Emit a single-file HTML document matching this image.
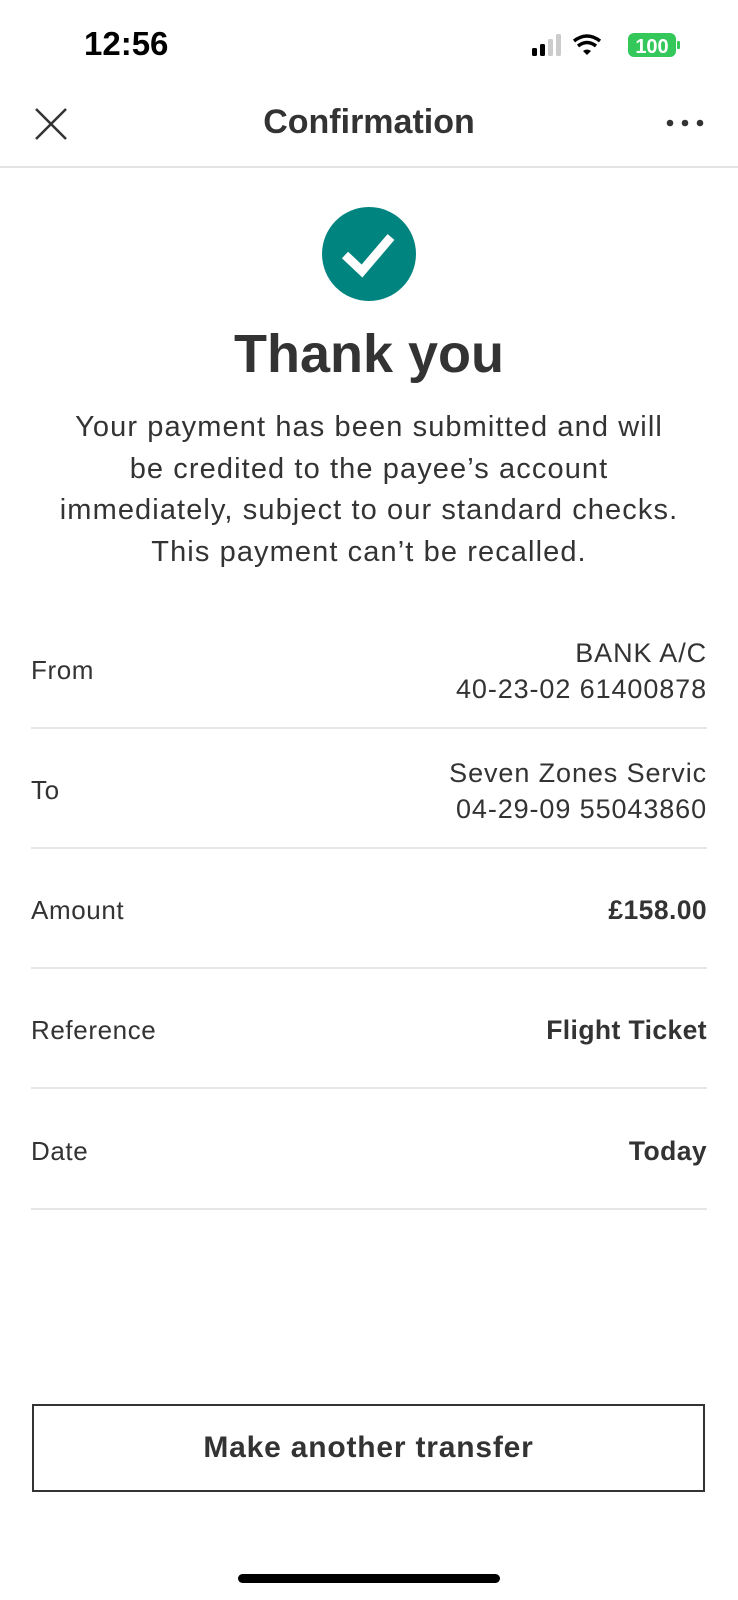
<!DOCTYPE html>
<html><head><meta charset="utf-8"><style>
body{margin:0;width:738px;height:1600px;background:#fff;font-family:"Liberation Sans",sans-serif;color:#333;position:relative;overflow:hidden}
.a{position:absolute}
.row{position:absolute;left:31px;right:31px;font-size:26px;color:#333;letter-spacing:0.6px}
.v{font-size:27px;letter-spacing:0.9px}
.b{font-weight:bold;font-size:26.5px;letter-spacing:0.4px}
.sep{position:absolute;left:31px;right:31px;height:2px;background:#e6e6e6}
</style></head><body>
<div class="a" style="left:84px;top:25px;font-size:33px;font-weight:bold;color:#000">12:56</div>
<svg class="a" style="left:530px;top:32px" width="152" height="26">
<rect x="2" y="16" width="5" height="8" rx="1.5" fill="#000"/><rect x="10" y="12" width="5" height="12" rx="1.5" fill="#000"/><rect x="18" y="7" width="5" height="17" rx="1.5" fill="#ccc"/><rect x="26" y="2" width="5" height="22" rx="1.5" fill="#ccc"/>
<path d="M44 9 Q57 -1 70 9" stroke="#000" stroke-width="3.5" fill="none"/><path d="M48 14 Q57 7 66 14" stroke="#000" stroke-width="3.5" fill="none"/><path d="M53 19 L57 23 L61 19 Q57 16 53 19Z" fill="#000"/>
<rect x="98" y="1" width="48" height="24" rx="6" fill="#34c759"/><rect x="147" y="9" width="3" height="8" rx="1" fill="#34c759"/>
<text x="122" y="21" font-family="Liberation Sans" font-weight="bold" font-size="20" fill="#fff" text-anchor="middle">100</text>
</svg>
<svg class="a" style="left:34px;top:107px" width="34" height="34"><path d="M2 2L32 32M32 2L2 32" stroke="#333" stroke-width="2.5"/></svg>
<div class="a" style="left:0;width:738px;top:103px;text-align:center;font-size:34px;font-weight:bold;color:#333">Confirmation</div>
<svg class="a" style="left:665px;top:118px" width="44" height="10"><circle cx="5" cy="5" r="3.3" fill="#333"/><circle cx="20" cy="5" r="3.3" fill="#333"/><circle cx="35" cy="5" r="3.3" fill="#333"/></svg>
<div class="a" style="left:0;width:738px;top:166px;height:2px;background:#e3e3e3"></div>
<svg class="a" style="left:322px;top:207px" width="94" height="94"><circle cx="47" cy="47" r="47" fill="#00847f"/><path d="M23 48L40 64L69 30" stroke="#fff" stroke-width="9" fill="none"/></svg>
<div class="a" style="left:0;width:738px;top:323px;text-align:center;font-size:54px;font-weight:bold;color:#333">Thank you</div>
<div class="a" style="left:0;width:738px;top:407px;text-align:center;font-size:29px;letter-spacing:1.1px;line-height:41.5px;color:#333">Your payment has been submitted and will<br>be credited to the payee’s account<br>immediately, subject to our standard checks.<br>This payment can’t be recalled.</div>
<div class="row" style="top:655px">From</div>
<div class="row v" style="top:635px;text-align:right;line-height:36px">BANK A/C<br>40-23-02 61400878</div>
<div class="sep" style="top:727px"></div>
<div class="row" style="top:775px">To</div>
<div class="row v" style="top:755px;text-align:right;line-height:36px">Seven Zones Servic<br>04-29-09 55043860</div>
<div class="sep" style="top:847px"></div>
<div class="row" style="top:895px">Amount</div>
<div class="row b" style="top:895px;text-align:right">£158.00</div>
<div class="sep" style="top:967px"></div>
<div class="row" style="top:1015px">Reference</div>
<div class="row b" style="top:1015px;text-align:right">Flight Ticket</div>
<div class="sep" style="top:1087px"></div>
<div class="row" style="top:1136px">Date</div>
<div class="row b" style="top:1136px;text-align:right">Today</div>
<div class="sep" style="top:1208px"></div>
<div class="a" style="left:32px;top:1404px;width:669px;height:84px;border:2px solid #333;text-align:center;line-height:84px;font-size:30px;letter-spacing:0.8px;font-weight:bold;color:#333">Make another transfer</div>
<div class="a" style="left:238px;top:1574px;width:262px;height:9px;border-radius:5px;background:#000"></div>
</body></html>
